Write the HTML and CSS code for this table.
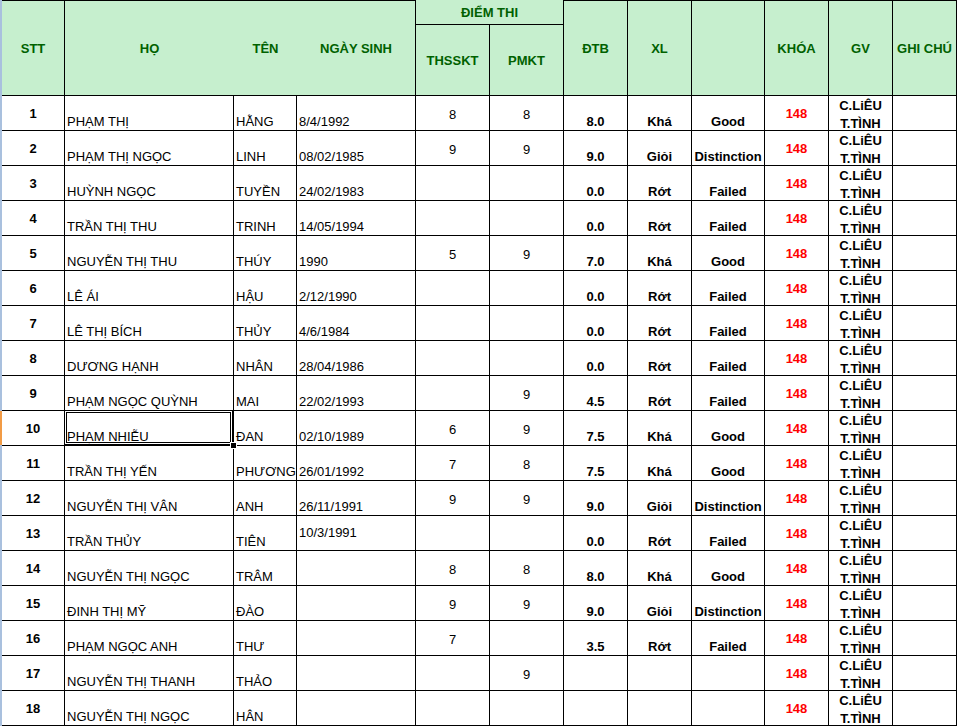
FILE: index.html
```html
<!DOCTYPE html>
<html lang="vi">
<head>
<meta charset="utf-8">
<title>Bảng điểm</title>
<link rel="stylesheet" href="styles.css">
</head>
<body>
<div class="sheet">
  <div class="rowhead"></div>
  <div class="grid">
    <div class="h top br span2 c1">STT</div>
    <div class="h top span2 c2">HỌ</div>
    <div class="h top span2 c3">TÊN</div>
    <div class="h top br span2 c4">NGÀY SINH</div>
    <div class="h br bb group">ĐIỂM THI</div>
    <div class="h br sub5">THSSKT</div>
    <div class="h br sub6">PMKT</div>
    <div class="h top br span2 c7">ĐTB</div>
    <div class="h top br span2 c8">XL</div>
    <div class="h top br span2 c9"></div>
    <div class="h top br span2 c10">KHÓA</div>
    <div class="h top br span2 c11">GV</div>
    <div class="h top br span2 c12">GHI CHÚ</div>

    <div class="d stt">1</div><div class="d nm">PHẠM THỊ</div><div class="d nm">HẰNG</div><div class="d nm">8/4/1992</div><div class="d sc">8</div><div class="d sc">8</div><div class="d bd">8.0</div><div class="d bd">Khá</div><div class="d bd">Good</div><div class="d kh">148</div><div class="d gv">C.LiÊU<br>T.TÌNH</div><div class="d"></div>
    <div class="d stt">2</div><div class="d nm">PHẠM THỊ NGỌC</div><div class="d nm">LINH</div><div class="d nm">08/02/1985</div><div class="d sc">9</div><div class="d sc">9</div><div class="d bd">9.0</div><div class="d bd">Giỏi</div><div class="d bd">Distinction</div><div class="d kh">148</div><div class="d gv">C.LiÊU<br>T.TÌNH</div><div class="d"></div>
    <div class="d stt">3</div><div class="d nm">HUỲNH NGỌC</div><div class="d nm">TUYỀN</div><div class="d nm">24/02/1983</div><div class="d sc"></div><div class="d sc"></div><div class="d bd">0.0</div><div class="d bd">Rớt</div><div class="d bd">Failed</div><div class="d kh">148</div><div class="d gv">C.LiÊU<br>T.TÌNH</div><div class="d"></div>
    <div class="d stt">4</div><div class="d nm">TRẦN THỊ THU</div><div class="d nm">TRINH</div><div class="d nm">14/05/1994</div><div class="d sc"></div><div class="d sc"></div><div class="d bd">0.0</div><div class="d bd">Rớt</div><div class="d bd">Failed</div><div class="d kh">148</div><div class="d gv">C.LiÊU<br>T.TÌNH</div><div class="d"></div>
    <div class="d stt">5</div><div class="d nm">NGUYỄN THỊ THU</div><div class="d nm">THÚY</div><div class="d nm">1990</div><div class="d sc">5</div><div class="d sc">9</div><div class="d bd">7.0</div><div class="d bd">Khá</div><div class="d bd">Good</div><div class="d kh">148</div><div class="d gv">C.LiÊU<br>T.TÌNH</div><div class="d"></div>
    <div class="d stt">6</div><div class="d nm">LÊ ÁI</div><div class="d nm">HẬU</div><div class="d nm">2/12/1990</div><div class="d sc"></div><div class="d sc"></div><div class="d bd">0.0</div><div class="d bd">Rớt</div><div class="d bd">Failed</div><div class="d kh">148</div><div class="d gv">C.LiÊU<br>T.TÌNH</div><div class="d"></div>
    <div class="d stt">7</div><div class="d nm">LÊ THỊ BÍCH</div><div class="d nm">THỦY</div><div class="d nm">4/6/1984</div><div class="d sc"></div><div class="d sc"></div><div class="d bd">0.0</div><div class="d bd">Rớt</div><div class="d bd">Failed</div><div class="d kh">148</div><div class="d gv">C.LiÊU<br>T.TÌNH</div><div class="d"></div>
    <div class="d stt">8</div><div class="d nm">DƯƠNG HẠNH</div><div class="d nm">NHÂN</div><div class="d nm">28/04/1986</div><div class="d sc"></div><div class="d sc"></div><div class="d bd">0.0</div><div class="d bd">Rớt</div><div class="d bd">Failed</div><div class="d kh">148</div><div class="d gv">C.LiÊU<br>T.TÌNH</div><div class="d"></div>
    <div class="d stt">9</div><div class="d nm">PHẠM NGỌC QUỲNH</div><div class="d nm">MAI</div><div class="d nm">22/02/1993</div><div class="d sc"></div><div class="d sc">9</div><div class="d bd">4.5</div><div class="d bd">Rớt</div><div class="d bd">Failed</div><div class="d kh">148</div><div class="d gv">C.LiÊU<br>T.TÌNH</div><div class="d"></div>
    <div class="d stt">10</div><div class="d nm sel">PHẠM NHIỄU<span class="selbox"></span><span class="handle"></span></div><div class="d nm">ĐAN</div><div class="d nm">02/10/1989</div><div class="d sc">6</div><div class="d sc">9</div><div class="d bd">7.5</div><div class="d bd">Khá</div><div class="d bd">Good</div><div class="d kh">148</div><div class="d gv">C.LiÊU<br>T.TÌNH</div><div class="d"></div>
    <div class="d stt">11</div><div class="d nm">TRẦN THỊ YẾN</div><div class="d nm">PHƯƠNG</div><div class="d nm">26/01/1992</div><div class="d sc">7</div><div class="d sc">8</div><div class="d bd">7.5</div><div class="d bd">Khá</div><div class="d bd">Good</div><div class="d kh">148</div><div class="d gv">C.LiÊU<br>T.TÌNH</div><div class="d"></div>
    <div class="d stt">12</div><div class="d nm">NGUYỄN THỊ VÂN</div><div class="d nm">ANH</div><div class="d nm">26/11/1991</div><div class="d sc">9</div><div class="d sc">9</div><div class="d bd">9.0</div><div class="d bd">Giỏi</div><div class="d bd">Distinction</div><div class="d kh">148</div><div class="d gv">C.LiÊU<br>T.TÌNH</div><div class="d"></div>
    <div class="d stt">13</div><div class="d nm">TRẦN THỦY</div><div class="d nm">TIÊN</div><div class="d nm mid">10/3/1991</div><div class="d sc"></div><div class="d sc"></div><div class="d bd">0.0</div><div class="d bd">Rớt</div><div class="d bd">Failed</div><div class="d kh">148</div><div class="d gv">C.LiÊU<br>T.TÌNH</div><div class="d"></div>
    <div class="d stt">14</div><div class="d nm">NGUYỄN THỊ NGỌC</div><div class="d nm">TRÂM</div><div class="d nm"></div><div class="d sc">8</div><div class="d sc">8</div><div class="d bd">8.0</div><div class="d bd">Khá</div><div class="d bd">Good</div><div class="d kh">148</div><div class="d gv">C.LiÊU<br>T.TÌNH</div><div class="d"></div>
    <div class="d stt">15</div><div class="d nm">ĐINH THỊ MỸ</div><div class="d nm">ĐÀO</div><div class="d nm"></div><div class="d sc">9</div><div class="d sc">9</div><div class="d bd">9.0</div><div class="d bd">Giỏi</div><div class="d bd">Distinction</div><div class="d kh">148</div><div class="d gv">C.LiÊU<br>T.TÌNH</div><div class="d"></div>
    <div class="d stt">16</div><div class="d nm">PHẠM NGỌC ANH</div><div class="d nm">THƯ</div><div class="d nm"></div><div class="d sc">7</div><div class="d sc"></div><div class="d bd">3.5</div><div class="d bd">Rớt</div><div class="d bd">Failed</div><div class="d kh">148</div><div class="d gv">C.LiÊU<br>T.TÌNH</div><div class="d"></div>
    <div class="d stt">17</div><div class="d nm">NGUYỄN THỊ THANH</div><div class="d nm">THẢO</div><div class="d nm"></div><div class="d sc"></div><div class="d sc">9</div><div class="d bd"></div><div class="d bd"></div><div class="d bd"></div><div class="d kh">148</div><div class="d gv">C.LiÊU<br>T.TÌNH</div><div class="d"></div>
    <div class="d stt">18</div><div class="d nm">NGUYỄN THỊ NGỌC</div><div class="d nm">HÂN</div><div class="d nm"></div><div class="d sc"></div><div class="d sc"></div><div class="d bd"></div><div class="d bd"></div><div class="d bd"></div><div class="d kh">148</div><div class="d gv">C.LiÊU<br>T.TÌNH</div><div class="d"></div>
  </div>
</div>
</body>
</html>
```

FILE: styles.css
```css
html, body {
  margin: 0;
  padding: 0;
  background: #ffffff;
}

.sheet {
  display: flex;
  width: 957px;
  height: 726px;
  overflow: hidden;
  font-family: "Liberation Sans", Arial, sans-serif;
  font-size: 13px;
  color: #000;
}

.rowhead {
  width: 2px;
  flex: none;
  background: linear-gradient(to bottom, #a9c0de 0, #a9c0de 411px, #f29b45 411px, #f29b45 445px, #a9c0de 445px);
}

.grid {
  display: grid;
  grid-template-columns: 63px 169px 63px 119px 74px 74px 64px 64px 73px 64px 64px 64px;
  grid-template-rows: 25px 71px repeat(18, 35px);
}

.grid > div {
  box-sizing: border-box;
  display: flex;
  white-space: nowrap;
  min-width: 0;
}

/* header */
.h {
  background: #c6efce;
  color: #006100;
  font-weight: bold;
  justify-content: center;
  align-items: center;
  border-bottom: 1px solid #000;
}
.top { border-top: 1px solid #000; }
.br { border-right: 1px solid #000; }
.bb { border-bottom: 1px solid #000; }
.span2 { grid-row: 1 / 3; }
.c1 { grid-column: 1; }
.c2 { grid-column: 2; }
.c3 { grid-column: 3; }
.c4 { grid-column: 4; }
.group { grid-column: 5 / 7; grid-row: 1; }
.sub5 { grid-column: 5; grid-row: 2; }
.sub6 { grid-column: 6; grid-row: 2; }
.c7 { grid-column: 7; }
.c8 { grid-column: 8; }
.c9 { grid-column: 9; }
.c10 { grid-column: 10; }
.c11 { grid-column: 11; }
.c12 { grid-column: 12; }

/* data cells */
.d {
  border-right: 1px solid #000;
  border-bottom: 1px solid #000;
  line-height: 15px;
}
.stt {
  font-weight: bold;
  justify-content: center;
  align-items: center;
}
.nm {
  align-items: flex-end;
  padding: 0 0 1px 2px;
}
.nm.mid {
  align-items: center;
  padding-bottom: 1px;
}
.sc {
  justify-content: center;
  align-items: center;
  padding-top: 3px;
}
.bd {
  font-weight: bold;
  justify-content: center;
  align-items: flex-end;
  padding-bottom: 1px;
}
.kh {
  color: #ff0000;
  font-weight: bold;
  justify-content: center;
  align-items: center;
}
.grid > .gv {
  display: block;
  font-weight: bold;
  text-align: center;
  line-height: 18px;
  padding-top: 1px;
}

/* selected cell */
.sel { position: relative; }
.selbox {
  position: absolute;
  top: -1px;
  left: -1px;
  right: 0;
  bottom: 0;
  border: 3px double #000;
  z-index: 2;
}
.handle {
  position: absolute;
  right: -4px;
  bottom: -4px;
  width: 7px;
  height: 7px;
  background: #000;
  border: 1px solid #fff;
  box-sizing: border-box;
  z-index: 3;
}
```
